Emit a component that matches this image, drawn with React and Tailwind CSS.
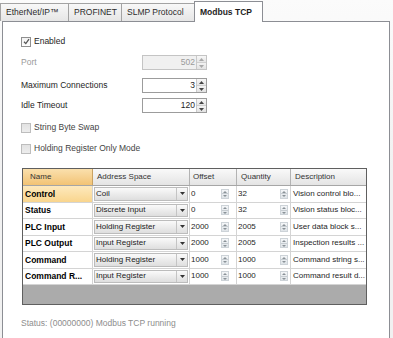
import React from 'react';

const rows = [
  { name: 'Control', space: 'Coil', offset: '0', qty: '32', desc: 'Vision control blo...', selected: true },
  { name: 'Status', space: 'Discrete Input', offset: '0', qty: '32', desc: 'Vision status bloc...' },
  { name: 'PLC Input', space: 'Holding Register', offset: '2000', qty: '2005', desc: 'User data block s...' },
  { name: 'PLC Output', space: 'Input Register', offset: '2000', qty: '2005', desc: 'Inspection results ...' },
  { name: 'Command', space: 'Holding Register', offset: '1000', qty: '1000', desc: 'Command string s...' },
  { name: 'Command R...', space: 'Input Register', offset: '1000', qty: '1000', desc: 'Command result d...' },
];

function Arrow({ up, color = '#333' }) {
  return (
    <svg width="5" height="3" viewBox="0 0 5 3">
      <path d={up ? 'M0 3 L2.5 0 L5 3 Z' : 'M0 0 L2.5 3 L5 0 Z'} fill={color} />
    </svg>
  );
}

function Spinner({ disabled }) {
  return (
    <div className="w-[10px] h-full flex flex-col border-l border-[#c9c9c9]">
      <div className="flex-1 flex items-center justify-center bg-linear-to-b from-[#f7f7f7] to-[#e6e6e6] border-b border-[#cfcfcf]">
        <Arrow up color={disabled ? '#a8a8a8' : '#444'} />
      </div>
      <div className="flex-1 flex items-center justify-center bg-linear-to-b from-[#f3f3f3] to-[#e2e2e2]">
        <Arrow color={disabled ? '#a8a8a8' : '#444'} />
      </div>
    </div>
  );
}

function NumberBox({ value, disabled }) {
  return (
    <div
      className={`w-[65px] h-[15px] flex border ${
        disabled ? 'border-[#c4c4c4] bg-[#f0f0f0] text-[#9a9a9a]' : 'border-[#9c9c9c] bg-white text-[#1e1e1e]'
      }`}
    >
      <div className="flex-1 flex items-center justify-end pr-[1px]">{value}</div>
      <Spinner disabled={disabled} />
    </div>
  );
}

function CheckBox({ checked, label }) {
  return (
    <div className="flex items-center h-[11px]">
      <div
        className={`w-[10px] h-[10px] border flex items-center justify-center ${
          checked
            ? 'border-[#8f8f8f] bg-linear-to-b from-[#f2f2f2] to-[#fdfdfd]'
            : 'border-[#bdbdbd] bg-linear-to-b from-[#e2e2e2] to-[#ededed]'
        }`}
      >
        {checked && (
          <svg width="7" height="7" viewBox="0 0 7 7">
            <path d="M1 3.8 L2.8 5.6 L6 1.2" fill="none" stroke="#555" strokeWidth="1.3" />
          </svg>
        )}
      </div>
      <span className={`ml-[3px] ${checked ? 'text-[#1e1e1e]' : 'text-[#444]'}`}>{label}</span>
    </div>
  );
}

function MiniSpin() {
  return (
    <div className="w-[8px] h-[10px] flex flex-col border border-[#cdd3d8] bg-linear-to-b from-[#f4f6f8] to-[#dfe4e8]">
      <div className="flex-1 flex items-center justify-center">
        <svg width="4" height="2" viewBox="0 0 4 2"><path d="M0 2 L2 0 L4 2 Z" fill="#8a9298" /></svg>
      </div>
      <div className="h-px bg-[#c6ccd1]" />
      <div className="flex-1 flex items-center justify-center">
        <svg width="4" height="2" viewBox="0 0 4 2"><path d="M0 0 L2 2 L4 0 Z" fill="#8a9298" /></svg>
      </div>
    </div>
  );
}

function Tab({ label, active, w }) {
  if (active) {
    return (
      <div
        className={`${w} h-[21px] -mb-px relative z-10 flex items-center pl-[5px] border border-b-0 border-[#8c8e94] bg-white font-bold text-[#1e1e1e]`}
      >
        {label}
      </div>
    );
  }
  return (
    <div
      className={`${w} h-[18px] flex items-center pl-[5px] border border-b-0 border-r-0 border-[#a3a3a3] bg-linear-to-b from-[#f8f8f8] to-[#e6e6e6] text-[#2b2b2b]`}
    >
      {label}
    </div>
  );
}

export default function App() {
  return (
    <div className="w-[393px] h-[338px] overflow-hidden bg-linear-to-b from-[#fbfbfb] via-[#f1f1f1] to-[#f1f1f1] font-['Liberation_Sans',Arial,sans-serif] text-[8.5px] leading-none text-[#1e1e1e]">
      <div className="flex items-end h-[21px]">
        <Tab label="EtherNet/IP™" w="w-[68px]" />
        <Tab label="PROFINET" w="w-[53px]" />
        <Tab label="SLMP Protocol" w="w-[73px]" />
        <Tab label="Modbus TCP" w="w-[69px]" active />
      </div>

      <div className="ml-[2px] w-[388px] h-[317px] border border-b-0 border-[#8c8e94] bg-white flex flex-col pl-[18px]">
        <div className="mt-[14px]">
          <CheckBox checked label="Enabled" />
        </div>

        <div className="mt-[8px] flex items-center h-[15px]">
          <span className="w-[121px] text-[#9a9a9a]">Port</span>
          <NumberBox value="502" disabled />
        </div>
        <div className="mt-[8px] flex items-center h-[15px]">
          <span className="w-[121px]">Maximum Connections</span>
          <NumberBox value="3" />
        </div>
        <div className="mt-[5px] flex items-center h-[15px]">
          <span className="w-[121px]">Idle Timeout</span>
          <NumberBox value="120" />
        </div>

        <div className="mt-[9px]">
          <CheckBox label="String Byte Swap" />
        </div>
        <div className="mt-[10px]">
          <CheckBox label="Holding Register Only Mode" />
        </div>

        <div className="mt-[14px] ml-px w-[345px] h-[137px] border border-[#5f5f5f] bg-[#ababab] flex flex-col text-[8px]">
          <div className="flex h-[17px] border-b border-[#a6a6a6] text-[#333]">
            <div className="w-[70px] flex items-center pl-[7px] border-r border-[#c9a262] bg-linear-to-b from-[#fae0ad] to-[#f2c374]">
              Name
            </div>
            <div className="w-[97px] flex items-center pl-[4px] border-r border-[#b3b3b3] bg-linear-to-b from-[#f9f9f9] to-[#e4e4e4]">
              Address Space
            </div>
            <div className="w-[47px] flex items-center pl-[3px] border-r border-[#b3b3b3] bg-linear-to-b from-[#f9f9f9] to-[#e4e4e4]">
              Offset
            </div>
            <div className="w-[54px] flex items-center pl-[4px] border-r border-[#b3b3b3] bg-linear-to-b from-[#f9f9f9] to-[#e4e4e4]">
              Quantity
            </div>
            <div className="w-[75px] flex items-center pl-[4px] bg-linear-to-b from-[#f9f9f9] to-[#e4e4e4]">
              Description
            </div>
          </div>

          {rows.map((r) => (
            <div key={r.name} className="flex h-[16.5px] border-b border-[#d4d4d4]">
              <div
                className={`w-[70px] flex items-center pl-[2px] border-r border-[#d4d4d4] font-bold text-[8.5px] text-black ${
                  r.selected ? 'bg-linear-to-b from-[#fde9bd] to-[#f9d58d]' : 'bg-white'
                }`}
              >
                {r.name}
              </div>
              <div className="w-[97px] flex items-stretch p-px pr-[1px] border-r border-[#d4d4d4] bg-white">
                <div className="flex-1 flex border border-[#bcbcbc] bg-linear-to-b from-[#fafafa] to-[#dedede]">
                  <div className="flex-1 flex items-center pl-[1px] text-[#222]">{r.space}</div>
                  <div className="w-[11px] flex items-center justify-center border-l border-[#c4c4c4]">
                    <Arrow />
                  </div>
                </div>
              </div>
              <div className="w-[47px] flex items-center pl-px pr-[7px] border-r border-[#d4d4d4] bg-white">
                <span className="flex-1">{r.offset}</span>
                <MiniSpin />
              </div>
              <div className="w-[54px] flex items-center pl-px pr-[2px] border-r border-[#d4d4d4] bg-white">
                <span className="flex-1">{r.qty}</span>
                <MiniSpin />
              </div>
              <div className="w-[75px] flex items-center pl-[2px] bg-white overflow-hidden whitespace-nowrap">
                {r.desc}
              </div>
            </div>
          ))}
        </div>

        <div className="mt-[14px] text-[#8d8d8d]">Status: (00000000) Modbus TCP running</div>
      </div>
    </div>
  );
}
